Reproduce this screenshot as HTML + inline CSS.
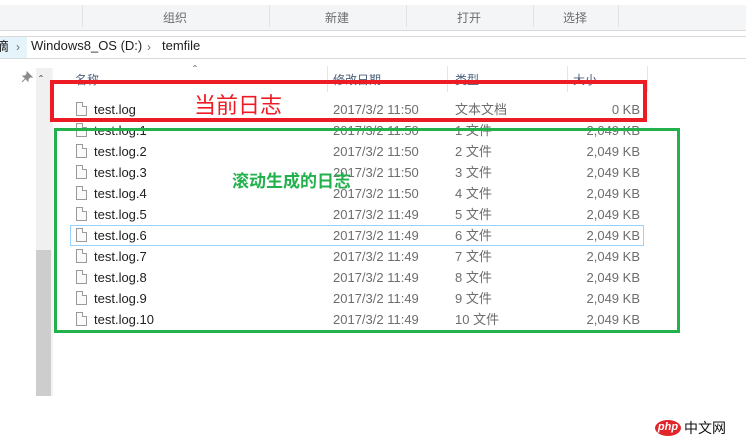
<!DOCTYPE html>
<html><head><meta charset="utf-8"><style>
*{margin:0;padding:0;box-sizing:border-box}
body{width:746px;height:446px;background:#fff;position:relative;overflow:hidden;font-family:"Liberation Sans","Noto Sans CJK SC",sans-serif;font-size:12px;color:#1e1e1e}
.a{position:absolute;white-space:nowrap;line-height:16px}
.g{color:#6d6d6d}
.ic{position:absolute;width:11px;height:14px;border:1px solid #9a9a9a;background:#fafafa}
.ic:after{content:"";position:absolute;right:-1px;top:-1px;width:4px;height:4px;background:#fff;border-left:1px solid #9a9a9a;border-bottom:1px solid #9a9a9a}
</style></head><body>
<div class="a" style="left:0;top:5px;width:746px;height:25px;background:#f4f5f6"></div>
<div class="a" style="left:82px;top:5px;width:1px;height:22px;background:#e3e3e3"></div>
<div class="a" style="left:269px;top:5px;width:1px;height:22px;background:#e3e3e3"></div>
<div class="a" style="left:406px;top:5px;width:1px;height:22px;background:#e3e3e3"></div>
<div class="a" style="left:533px;top:5px;width:1px;height:22px;background:#e3e3e3"></div>
<div class="a" style="left:618px;top:5px;width:1px;height:22px;background:#e3e3e3"></div>
<div class="a g" style="left:163px;top:10px">组织</div>
<div class="a g" style="left:325px;top:10px">新建</div>
<div class="a g" style="left:457px;top:10px">打开</div>
<div class="a g" style="left:563px;top:10px">选择</div>
<div class="a" style="left:0;top:30px;width:746px;height:1px;background:#dadada"></div>
<div class="a" style="left:0;top:36px;width:746px;height:1px;background:#dadada"></div>
<div class="a" style="left:0;top:58px;width:746px;height:1px;background:#dadada"></div>
<div class="a" style="left:0;top:37px;width:27px;height:21px;background:#e5f3fb"></div>
<div class="a" style="left:-4px;top:39px;font-size:13px">滴</div>
<div class="a g" style="left:16px;top:39px;font-size:12px">›</div>
<div class="a" style="left:31px;top:38px;font-size:13px">Windows8_OS (D:)</div>
<div class="a g" style="left:147px;top:39px;font-size:12px">›</div>
<div class="a" style="left:162px;top:38px;font-size:13px">temfile</div>
<svg class="a" style="left:21px;top:71px" width="12" height="12" viewBox="0 0 12 12"><path d="M6 1l5 5-2 0-2 2 0 2-5-5 2 0 2-2z M4 8l-3 3" fill="#8a8a8a" stroke="#8a8a8a"/></svg>
<div class="a" style="left:36px;top:68px;width:15px;height:182px;background:#f0f0f0"></div>
<div class="a" style="left:36px;top:250px;width:15px;height:146px;background:#cdcdcd"></div>
<div class="a" style="left:51px;top:68px;width:2px;height:328px;background:#f3f3f3"></div>
<div class="a" style="left:39px;top:72px;font-size:12px;color:#444">ˆ</div>
<div class="a g" style="left:193px;top:62px;font-size:12px">ˆ</div>
<div class="a" style="left:327px;top:66px;width:1px;height:26px;background:#e5e5e5"></div>
<div class="a" style="left:447px;top:66px;width:1px;height:26px;background:#e5e5e5"></div>
<div class="a" style="left:567px;top:66px;width:1px;height:26px;background:#e5e5e5"></div>
<div class="a" style="left:647px;top:66px;width:1px;height:26px;background:#e5e5e5"></div>
<div class="a" style="left:75px;top:72px;color:#4c607a">名称</div>
<div class="a" style="left:333px;top:72px;color:#4c607a">修改日期</div>
<div class="a" style="left:455px;top:72px;color:#4c607a">类型</div>
<div class="a" style="left:573px;top:72px;color:#4c607a">大小</div>
<div class="a" style="left:70px;top:225px;width:574px;height:21px;border:1px solid #99d1ff"></div>
<div id="rows"></div>
<script>
var d=[["test.log","2017/3/2 11:50","文本文档","0 KB"]];
var t=["11:50","11:50","11:50","11:50","11:49","11:49","11:49","11:49","11:49","11:49"];
for(var i=1;i<=10;i++)d.push(["test.log."+i,"2017/3/2 "+t[i-1],i+" 文件","2,049 KB"]);
var h="";
d.forEach(function(r,i){var y=102+i*21;
h+='<div class="ic" style="left:76px;top:'+(y)+'px"></div>';
h+='<div class="a" style="left:94px;top:'+y+'px;font-size:13px">'+r[0]+'</div>';
h+='<div class="a g" style="left:333px;top:'+y+'px;font-size:13px">'+r[1]+'</div>';
h+='<div class="a g" style="left:455px;top:'+y+'px;font-size:13px">'+r[2]+'</div>';
h+='<div class="a g" style="right:106px;top:'+y+'px;font-size:13px">'+r[3]+'</div>';});
document.getElementById("rows").innerHTML=h;
</script>
<div class="a" style="left:50px;top:80px;width:597px;height:42px;border:4px solid #ed1c24"></div>
<div class="a" style="left:54px;top:128px;width:626px;height:205px;border:3px solid #22b14c"></div>
<div class="a" style="left:194px;top:92px;font-size:22px;line-height:24px;color:#ed1c24;font-family:'Noto Sans CJK SC',sans-serif">当前日志</div>
<div class="a" style="left:232px;top:170px;font-size:17px;line-height:20px;font-weight:bold;color:#22b14c;font-family:'Noto Sans CJK SC',sans-serif">滚动生成的日志</div>
<div class="a" style="left:655px;top:420px;width:26px;height:16px;border-radius:50%;background:#e0262b;color:#fff;font-size:11px;font-style:italic;text-align:center;line-height:15px;font-weight:bold">php</div>
<div class="a" style="left:684px;top:419px;font-size:14px;color:#111;font-family:'Noto Sans CJK SC',sans-serif;line-height:18px">中文网</div>
</body></html>
